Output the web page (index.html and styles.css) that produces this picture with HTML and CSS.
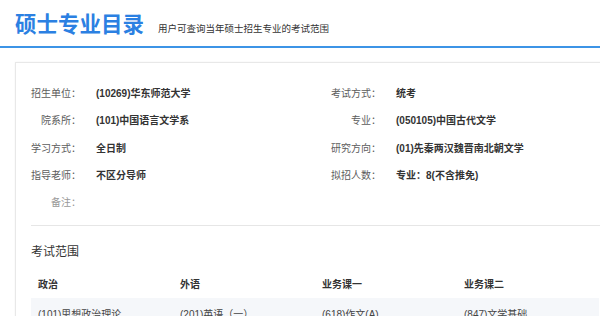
FILE: index.html
```html
<!DOCTYPE html>
<html lang="zh-CN">
<head>
    <meta charset="UTF-8">
    <meta name="viewport" content="width=device-width, initial-scale=1.0">
    <title>硕士专业目录</title>
    <link rel="stylesheet" href="styles.css">
</head>
<body>
    <div class="page-header">
        <h1 class="page-title">硕士专业目录</h1>
        <span class="page-desc">用户可查询当年硕士招生专业的考试范围</span>
    </div>

    <div class="card">
        <div class="info-grid">
            <div class="info-item"><span class="info-label">招生单位：</span><span class="info-value">(10269)华东师范大学</span></div>
            <div class="info-item"><span class="info-label">考试方式：</span><span class="info-value">统考</span></div>
            <div class="info-item"><span class="info-label">院系所：</span><span class="info-value">(101)中国语言文学系</span></div>
            <div class="info-item"><span class="info-label">专业：</span><span class="info-value">(050105)中国古代文学</span></div>
            <div class="info-item"><span class="info-label">学习方式：</span><span class="info-value">全日制</span></div>
            <div class="info-item"><span class="info-label">研究方向：</span><span class="info-value">(01)先秦两汉魏晋南北朝文学</span></div>
            <div class="info-item"><span class="info-label">指导老师：</span><span class="info-value">不区分导师</span></div>
            <div class="info-item"><span class="info-label">拟招人数：</span><span class="info-value">专业：8(不含推免)</span></div>
            <div class="info-item"><span class="info-label muted">备注：</span><span class="info-value"></span></div>
        </div>

        <div class="divider"></div>

        <h2 class="section-title">考试范围</h2>
        <table class="exam-table">
            <thead>
                <tr>
                    <th>政治</th>
                    <th>外语</th>
                    <th>业务课一</th>
                    <th>业务课二</th>
                </tr>
            </thead>
            <tbody>
                <tr>
                    <td>(101)思想政治理论</td>
                    <td>(201)英语（一）</td>
                    <td>(618)作文(A)</td>
                    <td>(847)文学基础</td>
                </tr>
            </tbody>
        </table>
    </div>
</body>
</html>
```

FILE: styles.css
```css
body {
    font-family: "Liberation Sans", "Noto Sans CJK SC", sans-serif;
    background-color: #fff;
    color: #333;
    margin: 0;
    padding: 0;
    overflow: hidden;
}

.page-header {
    display: flex;
    align-items: baseline;
    height: 48px;
    padding-left: 15px;
    border-bottom: 2px solid #3c94e6;
    box-sizing: border-box;
}

.page-title {
    margin: 0;
    padding-top: 7px;
    font-size: 21.5px;
    font-weight: bold;
    color: #2b80e2;
}

.page-desc {
    margin-left: 14px;
    font-size: 9.5px;
    color: #333;
}

.card {
    margin: 14px -20px 0 15px;
    padding: 16px 0 0 15px;
    border: 1px solid #e8e8e8;
    box-shadow: 0 0 2px rgba(0, 0, 0, 0.05);
    height: 252px;
    overflow: hidden;
}

.info-grid {
    display: grid;
    grid-template-columns: 300px 300px;
}

.info-item {
    display: flex;
    align-items: center;
    height: 27.25px;
    font-size: 10px;
}

.info-label {
    width: 50px;
    text-align: right;
    color: #5c5c5c;
}

.info-label.muted {
    color: #999;
}

.info-value {
    margin-left: 15px;
    font-weight: bold;
    color: #333;
}

.divider {
    margin-top: 10px;
    border-top: 1px solid #e6e6e6;
}

.section-title {
    margin: 16px 0 0;
    font-size: 12px;
    font-weight: normal;
    line-height: 20px;
    color: #333;
}

.exam-table {
    margin-top: 6px;
    border-collapse: collapse;
    font-size: 10px;
}

.exam-table th,
.exam-table td {
    width: 142px;
    height: 30px;
    padding: 0 0 0 7px;
    box-sizing: border-box;
    text-align: left;
}

.exam-table th {
    font-weight: bold;
    color: #333;
}

.exam-table tbody tr {
    background-color: #f5f7fa;
}

.exam-table td {
    color: #444;
}
```
